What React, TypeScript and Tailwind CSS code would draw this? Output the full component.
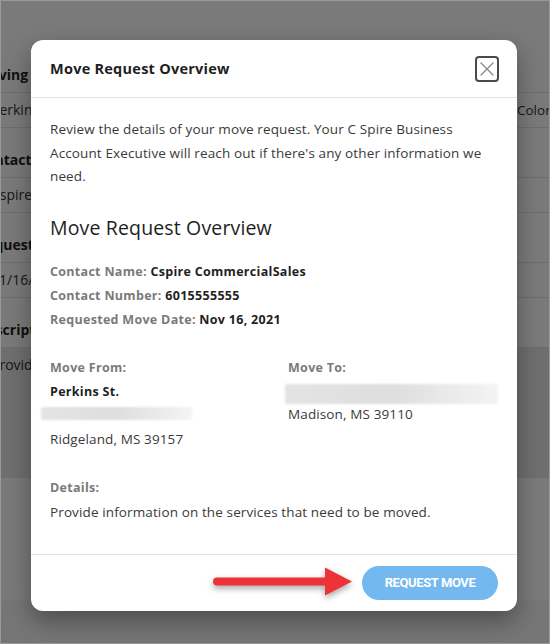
import React from 'react';

const bgRows = [
  { kind: 'label', left: 'Moving From', right: 'Moving To' },
  { kind: 'value', left: 'Perkins St.', right: 'Colony' },
  { kind: 'label', left: 'Contact', right: '' },
  { kind: 'value', left: 'Cspire CommercialSales', right: '' },
  { kind: 'label', left: 'Requested Date', right: '' },
  { kind: 'value', left: '11/16/2021', right: '' },
  { kind: 'label', left: 'Description', right: '' },
];

function BackgroundPage() {
  return (
    <div className="flex flex-col text-[#222]">
      <div className="h-[40px]" />
      {bgRows.map((row, i) =>
        row.kind === 'label' ? (
          <div
            key={i}
            className={`flex items-end border-b border-[#e3e3e3] pb-[8px] ${i === 0 ? 'h-[53px]' : 'h-[50px]'}`}
          >
            <span className="-ml-[23px] w-[500px] text-[14px] font-bold leading-[18px]">{row.left}</span>
          </div>
        ) : (
          <div key={i} className="flex h-[35px] items-center border-b border-[#e3e3e3]">
            <span className="-ml-[9px] w-[526px] shrink-0 text-[14px] leading-[18px] text-[#333]">{row.left}</span>
            <span className="shrink-0 text-[13.5px] leading-[18px] text-[#333]">{row.right}</span>
          </div>
        )
      )}
      <div className="h-[130px] bg-[#e8e8e8] pt-[6px]">
        <span className="-ml-[9px] block text-[14px] text-[#333]">Provide information</span>
      </div>
      <div className="h-[122px] bg-white" />
      <div className="h-[60px] bg-[#f6f6f6]" />
    </div>
  );
}

function CloseButton() {
  return (
    <button className="flex h-[26px] w-[24px] items-center justify-center rounded-[4px] border-2 border-[#4a4a4a] bg-white">
      <svg width="16" height="16" viewBox="0 0 16 16" fill="none">
        <path d="M2 2L14 14M14 2L2 14" stroke="#8a8a8a" strokeWidth="1.4" strokeLinecap="round" />
      </svg>
    </button>
  );
}

function RedArrow() {
  return (
    <svg width="145" height="38" viewBox="0 0 145 38" className="-mr-[2px] drop-shadow-[0_3px_3px_rgba(0,0,0,0.35)]">
      <path
        d="M6 13.5 H114 V3.5 L141 17.5 L114 31.5 V21.5 H6 A4 4 0 0 1 6 13.5 Z"
        fill="#ee3338"
      />
    </svg>
  );
}

function Field({ label, value }: { label: string; value: string }) {
  return (
    <div className="text-[12.5px] font-bold leading-[24px] tracking-[0.3px]">
      <span className="text-[#7a7a7a]">{label} </span>
      <span className="text-[#1f1f1f]">{value}</span>
    </div>
  );
}

function BlurBar({ className }: { className: string }) {
  return (
    <div
      className={`rounded-[2px] bg-gradient-to-r from-[#e4e4e4] via-[#dedede] to-[#f4f4f4] blur-[1px] ${className}`}
    />
  );
}

export default function App() {
  return (
    <div className="relative h-[644px] w-[550px] overflow-hidden bg-white font-['Open_Sans',sans-serif]">
      <BackgroundPage />

      {/* dimmed overlay + modal */}
      <div className="absolute inset-0 border border-[#9a9a9a] bg-black/[0.52] pl-[30px] pt-[39px]">
        <div className="flex h-[571px] w-[486px] flex-col rounded-[12px] bg-white shadow-[0_10px_24px_rgba(0,0,0,0.35)]">
          {/* header */}
          <div className="flex h-[58px] items-center justify-between border-b border-[#e2e2e2] pl-[19px] pr-[18px]">
            <h2 className="pt-[1px] text-[14.5px] font-bold tracking-[0.25px] text-[#1e1e1e]">
              Move Request Overview
            </h2>
            <CloseButton />
          </div>

          {/* body */}
          <div className="flex-1 pl-[19px] pr-[19px] pt-[20px] text-[#3a3a3a]">
            <p className="text-[13.5px] leading-[23.5px] tracking-[0.12px]">
              Review the details of your move request. Your C Spire Business Account Executive will reach out if
              there's any other information we need.
            </p>

            <h3 className="mt-[25px] text-[19.5px] leading-[28px] tracking-[0.15px] text-[#1e1e1e]">
              Move Request Overview
            </h3>

            <div className="mt-[18px] flex flex-col">
              <Field label="Contact Name:" value="Cspire CommercialSales" />
              <Field label="Contact Number:" value="6015555555" />
              <Field label="Requested Move Date:" value="Nov 16, 2021" />
            </div>

            <div className="mt-[24px] flex">
              <div className="flex w-[238px] flex-col">
                <span className="text-[12.5px] font-bold leading-[24px] tracking-[0.3px] text-[#7a7a7a]">
                  Move From:
                </span>
                <span className="text-[12.5px] font-bold leading-[24px] tracking-[0.3px] text-[#1f1f1f]">
                  Perkins St.
                </span>
                <BlurBar className="-ml-[9px] mt-[3px] h-[13px] w-[151px]" />
                <span className="mt-[7px] text-[13.5px] leading-[24px] tracking-[0.12px]">Ridgeland, MS 39157</span>
              </div>
              <div className="flex flex-1 flex-col">
                <span className="text-[12.5px] font-bold leading-[24px] tracking-[0.3px] text-[#7a7a7a]">
                  Move To:
                </span>
                <BlurBar className="-ml-[3px] mt-[4px] h-[20px] w-[213px]" />
                <span className="text-[13.5px] leading-[20px] tracking-[0.12px]">Madison, MS 39110</span>
              </div>
            </div>

            <div className="mt-[25px] text-[12.5px] font-bold leading-[24px] tracking-[0.3px] text-[#7a7a7a]">
              Details:
            </div>
            <p className="text-[13.5px] leading-[24px] tracking-[0.12px]">
              Provide information on the services that need to be moved.
            </p>
          </div>

          {/* footer */}
          <div className="flex h-[57px] items-center justify-end gap-[8px] border-t border-[#e2e2e2] pb-[1px] pr-[19px]">
            <RedArrow />
            <button className="h-[34px] w-[136px] rounded-full bg-[#73b8ef] font-['Roboto',sans-serif] text-[13px] font-bold tracking-[-0.4px] text-white">
              REQUEST MOVE
            </button>
          </div>
        </div>
      </div>
    </div>
  );
}
